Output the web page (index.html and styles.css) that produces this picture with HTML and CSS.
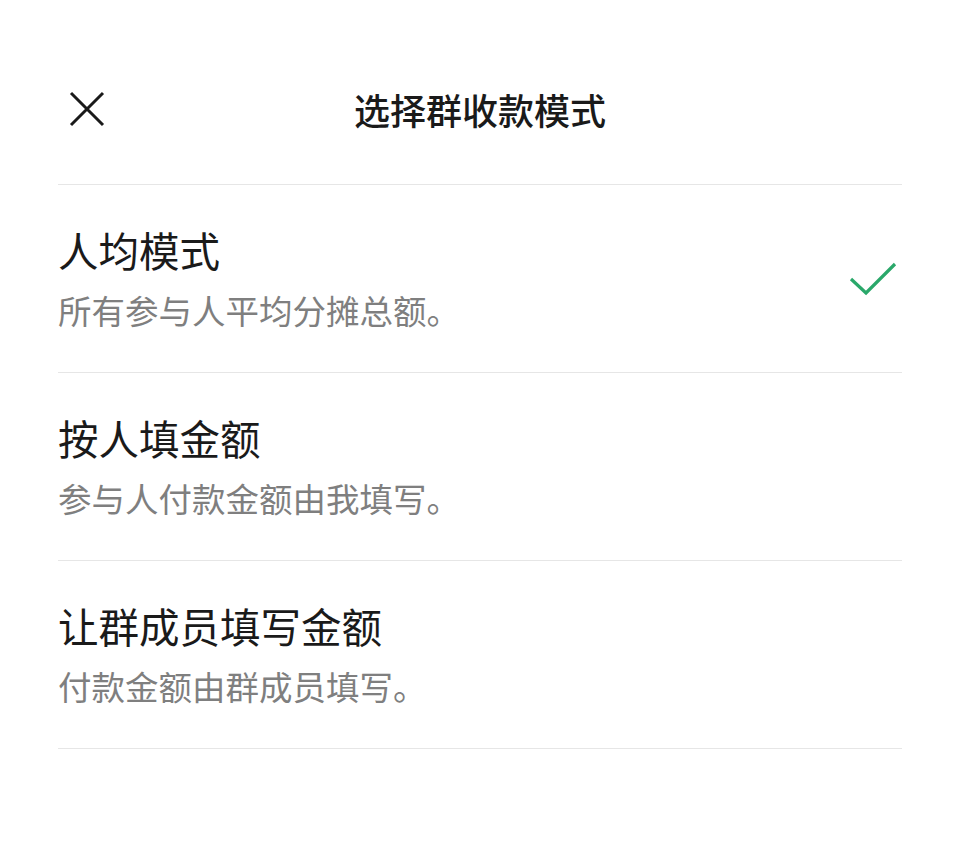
FILE: index.html
```html
<!DOCTYPE html>
<html lang="zh-CN">
<head>
<meta charset="utf-8">
<link rel="stylesheet" href="styles.css">
</head>
<body>
<div class="page">
  <header class="header">
    <div class="close">
      <svg width="36" height="36" viewBox="0 0 36 36"><path d="M2 2 L34 34 M34 2 L2 34" stroke="#1a1a1a" stroke-width="3" fill="none"/></svg>
    </div>
    <div class="title">选择群收款模式</div>
  </header>
  <div class="list">
    <div class="item">
      <div class="text">
        <div class="item-title">人均模式</div>
        <div class="item-sub">所有参与人平均分摊总额。</div>
      </div>
      <svg class="check" width="48" height="34" viewBox="0 0 48 34"><path d="M2 17 L17 31 L46 2" stroke="#2aa86a" stroke-width="3.2" fill="none"/></svg>
    </div>
    <div class="item">
      <div class="text">
        <div class="item-title">按人填金额</div>
        <div class="item-sub">参与人付款金额由我填写。</div>
      </div>
    </div>
    <div class="item">
      <div class="text">
        <div class="item-title">让群成员填写金额</div>
        <div class="item-sub">付款金额由群成员填写。</div>
      </div>
    </div>
  </div>
</div>
</body>
</html>
```
FILE: styles.css
```css
html, body {
  margin: 0;
  padding: 0;
  background: #fff;
}
body {
  font-family: "Noto Sans CJK SC", "Noto Sans", sans-serif;
  color: #1a1a1a;
}
.page {
  width: 960px;
  height: 854px;
}
.header {
  position: relative;
  height: 184px;
  margin: 0 58px;
  border-bottom: 1px solid #e6e6e6;
  display: flex;
  align-items: center;
  justify-content: center;
}
.close {
  position: absolute;
  left: 11px;
  top: 91px;
  width: 36px;
  height: 36px;
}
.close svg { display: block; }
.title {
  font-size: 36px;
  font-weight: 500;
  line-height: 40px;
  margin-top: 34px;
  margin-left: 0;
}
.list {
  margin: 0 58px;
}
.item {
  height: 187px;
  border-bottom: 1px solid #e6e6e6;
  display: flex;
  align-items: flex-start;
  justify-content: space-between;
}
.text {
  padding-top: 36px;
}
.item-title {
  font-size: 40.5px;
  line-height: 58px;
  color: #1a1a1a;
}
.item-sub {
  font-size: 33.5px;
  line-height: 62px;
  color: #7f7f7f;
}
.check {
  margin-top: 77px;
  margin-right: 5px;
}
```
